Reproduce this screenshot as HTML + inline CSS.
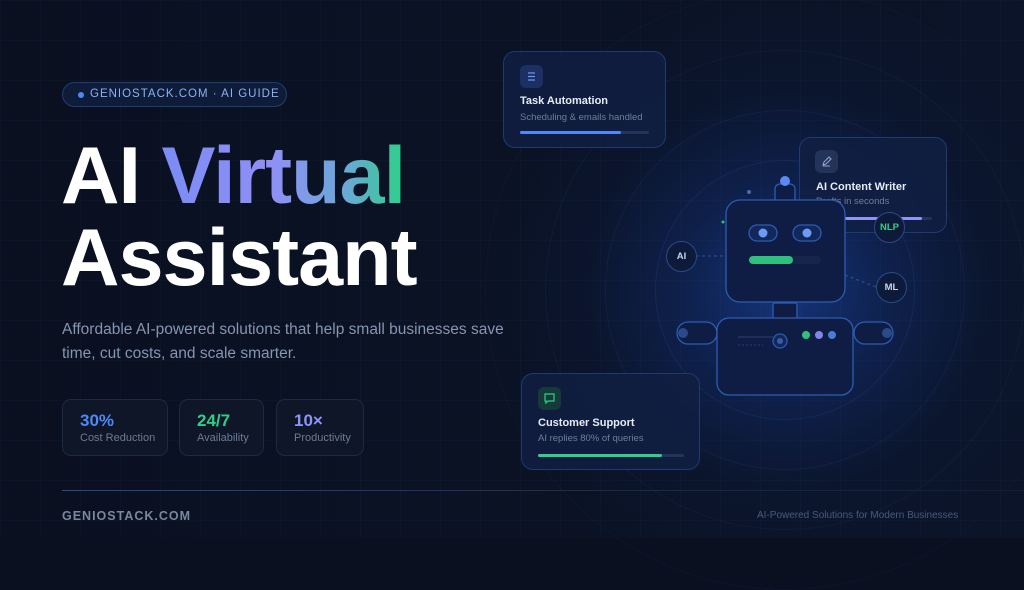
<!DOCTYPE html>
<html><head><meta charset="utf-8"><style>
*{margin:0;padding:0;box-sizing:border-box}
html{background:#0a1020}
body{width:1024px;height:538px;overflow:hidden;background:#0a1020;font-family:"Liberation Sans",sans-serif;position:relative}
.bg{position:absolute;inset:0;background:
radial-gradient(circle at 785px 290px,rgba(30,80,190,.55) 0,rgba(20,55,140,.35) 110px,rgba(12,30,75,.2) 200px,rgba(10,16,32,0) 300px),
linear-gradient(90deg,#0a1020,#0b1428);}
.grid{position:absolute;inset:0;background-image:linear-gradient(rgba(60,90,150,.06) 1px,transparent 1px),linear-gradient(90deg,rgba(60,90,150,.06) 1px,transparent 1px);background-size:40px 40px}
.abs{position:absolute}
.badge{left:62px;top:82px;width:225px;height:25px;border:1px solid #1f3d72;border-radius:13px;background:#0e1c3a;color:#8fb0f0;font-size:11.5px;letter-spacing:1px;line-height:23px;padding-left:27px}
.badge:before{content:"";position:absolute;left:15px;top:9px;width:6px;height:6px;border-radius:50%;background:#4d8af5}
h1{position:absolute;left:61px;top:135px;font-size:81px;line-height:82px;font-weight:700;color:#fff;letter-spacing:-1px}
.grad{background:linear-gradient(90deg,#7b8cf5 0%,#8f8ff5 45%,#6aa8d8 75%,#2ed08a 100%);-webkit-background-clip:text;background-clip:text;color:transparent}
p.lead{left:62px;top:318px;font-size:15.5px;line-height:24px;color:#8595b2;width:450px}
.stat{top:399px;height:57px;border:1px solid #1c2a44;border-radius:9px;background:#0e1628;padding:11px 0 0 17px}
.stat b{display:block;font-size:17px;line-height:20px}
.stat span{display:block;font-size:11px;color:#6d7b94;margin-top:1px}
.card{border:1px solid #1f3a6e;border-radius:12px;background:rgba(16,30,66,.85)}
.card .ic{position:absolute;left:16px;top:13px;width:23px;height:23px;border-radius:6px}
.card .t{position:absolute;left:16px;font-size:11px;font-weight:700;color:#e6ecf7}
.card .s{position:absolute;left:16px;font-size:9.5px;color:#6f7e9c}
.card .bar{position:absolute;left:16px;height:3px;border-radius:2px;background:#22345a}
.c{position:absolute;border-radius:50%;border:1px solid rgba(60,100,190,.16)}
.node{position:absolute;width:31px;height:31px;border-radius:50%;border:1px solid #2a4a8a;background:#0e1a3a;color:#c8d4f0;font-size:9.5px;font-weight:700;text-align:center;line-height:29px}
</style></head><body>
<div class="bg"></div><div class="grid"></div>
<div class="c" style="left:655px;top:160px;width:260px;height:260px"></div>
<div class="c" style="left:605px;top:110px;width:360px;height:360px;border-color:rgba(60,100,190,.12)"></div>
<div class="c" style="left:545px;top:50px;width:480px;height:480px;border-color:rgba(60,100,190,.1)"></div>
<div class="c" style="left:485px;top:-10px;width:600px;height:600px;border-color:rgba(60,100,190,.07)"></div>

<div class="abs badge">GENIOSTACK.COM · AI GUIDE</div>
<h1>AI <span class="grad">Virtual</span><br>Assistant</h1>
<p class="abs lead">Affordable AI-powered solutions that help small businesses save time, cut costs, and scale smarter.</p>
<div class="abs stat" style="left:62px;width:106px"><b style="color:#4d8af5">30%</b><span>Cost Reduction</span></div>
<div class="abs stat" style="left:179px;width:85px"><b style="color:#2fcf8a">24/7</b><span>Availability</span></div>
<div class="abs stat" style="left:276px;width:88px"><b style="color:#8f95f7">10×</b><span>Productivity</span></div>

<div class="abs" style="left:62px;top:490px;width:962px;height:1px;background:linear-gradient(90deg,#2a4a86,#1a2a48 60%,#141e34)"></div>
<div class="abs" style="left:62px;top:509px;font-size:12.5px;font-weight:700;letter-spacing:1px;color:#7a879c">GENIOSTACK.COM</div>
<div class="abs" style="left:757px;top:510px;font-size:10px;color:#4a5a7a">AI-Powered Solutions for Modern Businesses</div>

<div class="abs card" style="left:503px;top:51px;width:163px;height:97px">
<div class="ic" style="background:#1c3064"><svg width="23" height="23"><path d="M8 8h7M8 11.5h7M8 15h7" stroke="#6d95f0" stroke-width="1.2"/></svg></div>
<div class="t" style="top:43px">Task Automation</div>
<div class="s" style="top:60px">Scheduling &amp; emails handled</div>
<div class="bar" style="top:79px;width:129px"><div style="width:101px;height:3px;border-radius:2px;background:#4d8af5"></div></div>
</div>
<div class="abs card" style="left:799px;top:137px;width:148px;height:96px">
<div class="ic" style="left:15px;top:12px;background:#243458"><svg width="23" height="23"><path d="M8 15l1-3 5-5 2 2-5 5zM8 16h7" stroke="#8fa0d8" stroke-width="1.1" fill="none"/></svg></div>
<div class="t" style="top:43px">AI Content Writer</div>
<div class="s" style="top:58px">Drafts in seconds</div>
<div class="bar" style="top:79px;width:116px"><div style="width:106px;height:3px;border-radius:2px;background:#8f95f7"></div></div>
</div>
<div class="abs card" style="left:521px;top:373px;width:179px;height:97px">
<div class="ic" style="background:#143a3a"><svg width="23" height="23"><path d="M7 7h9v7h-6l-2 2v-2H7z" stroke="#2fcf8a" stroke-width="1.2" fill="none"/></svg></div>
<div class="t" style="top:43px">Customer Support</div>
<div class="s" style="top:59px">AI replies 80% of queries</div>
<div class="bar" style="top:80px;width:146px"><div style="width:124px;height:3px;border-radius:2px;background:#2fcf8a"></div></div>
</div>

<svg class="abs" style="left:0;top:0" width="1024" height="538">
<g stroke="#2c5cb4" stroke-width="1.3" fill="#0f1c44">
<line x1="696" y1="256" x2="726" y2="256" stroke-dasharray="3 3" stroke="#2a4a8a"/>
<line x1="845" y1="275" x2="876" y2="287" stroke-dasharray="3 3" stroke="#2a4a8a"/>
<rect x="775" y="184" width="20" height="21" rx="5"/>
<rect x="726" y="200" width="119" height="102" rx="14"/>
<rect x="773" y="303" width="24" height="16" rx="2"/>
<rect x="677" y="322" width="40" height="22" rx="11"/>
<rect x="854" y="322" width="39" height="22" rx="11"/>
<rect x="717" y="318" width="136" height="77" rx="12"/>
<rect x="749" y="225" width="28" height="16" rx="8" fill="#13285a"/>
<rect x="793" y="225" width="28" height="16" rx="8" fill="#13285a"/>
<rect x="749" y="256" width="72" height="8" rx="4" fill="#15264a" stroke="none"/>
<circle cx="780" cy="341" r="7" fill="#13285a"/>
</g>
<circle cx="785" cy="181" r="5" fill="#5b8af5"/>
<circle cx="763" cy="233" r="4.5" fill="#6b9af8"/><circle cx="807" cy="233" r="4.5" fill="#6b9af8"/>
<rect x="749" y="256" width="44" height="8" rx="4" fill="#2fbf7e"/>
<circle cx="780" cy="341" r="3" fill="#3a5ba8"/>
<circle cx="683" cy="333" r="5" fill="#2a4a8a"/><circle cx="887" cy="333" r="5" fill="#2a4a8a"/>
<circle cx="806" cy="335" r="4" fill="#2fbf7e"/><circle cx="819" cy="335" r="4" fill="#7f86e8"/><circle cx="832" cy="335" r="4" fill="#4d7ad8"/>
<line x1="738" y1="337" x2="773" y2="337" stroke="#2a4070"/><line x1="738" y1="345" x2="763" y2="345" stroke="#2a4070" stroke-dasharray="2 2"/>
<circle cx="749" cy="192" r="2" fill="#4d6ab0"/><circle cx="723" cy="222" r="1.5" fill="#2fbf7e"/>
</svg>
<div class="node" style="left:666px;top:241px">AI</div>
<div class="node" style="left:874px;top:212px;color:#2fcf8a">NLP</div>
<div class="node" style="left:876px;top:272px">ML</div>
</body></html>
